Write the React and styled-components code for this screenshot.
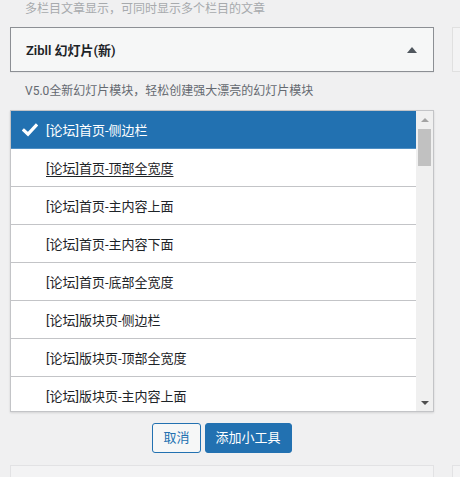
import React from "react";
import styled, { createGlobalStyle } from "styled-components";

const Global = createGlobalStyle`
  html, body { margin: 0; padding: 0; background: #f0f0f1; overflow: hidden; }
  body { font-family: Roboto, "Noto Sans CJK SC", sans-serif; color: #2c3338; }
  * { box-sizing: border-box; }
`;

const Page = styled.div`
  display: flex;
  align-items: flex-start;
  gap: 18px;
  padding-left: 10px;
  width: 460px;
  height: 477px;
  overflow: hidden;
`;

const Main = styled.div`
  width: 424px;
  flex-shrink: 0;
  display: flex;
  flex-direction: column;
  & > * { flex-shrink: 0; }
`;

const Side = styled.div`
  flex: 1;
  display: flex;
  flex-direction: column;
  padding-top: 27px;
  & > * { flex-shrink: 0; }
`;

const Desc = styled.div`
  font-size: 12px;
  line-height: 18px;
  color: ${(p) => (p.$faded ? "#a7aaad" : "#646970")};
  padding-left: 15px;
  margin-top: ${(p) => p.$mt || 0}px;
  white-space: nowrap;
`;

const Header = styled.div`
  margin-top: ${(p) => (p.$ghost ? 0 : 9)}px;
  height: 45px;
  border: 1px solid ${(p) => (p.$ghost ? "#e0e0e0" : "#8c8f94")};
  background: ${(p) => (p.$ghost ? "#f3f3f4" : "#f6f7f7")};
  box-shadow: ${(p) => (p.$ghost ? "none" : "0 1px 1px rgba(0,0,0,.04)")};
  display: flex;
  align-items: center;
  justify-content: space-between;
  padding: 0 16px 0 15px;
`;

const Title = styled.h3`
  margin: 0;
  font-size: 13px;
  font-weight: 600;
  color: #1d2327;
`;

const Caret = styled.span`
  width: 0;
  height: 0;
  border-left: 5px solid transparent;
  border-right: 5px solid transparent;
  border-bottom: 6px solid #50575e;
`;

const ListBox = styled.div`
  margin-top: 10px;
  height: 302px;
  border: 1px solid #c3c4c7;
  background: #fff;
  box-shadow: 0 1px 2px rgba(0, 0, 0, 0.12);
  display: flex;
  overflow: hidden;
`;

const Items = styled.ul`
  list-style: none;
  margin: 0;
  padding: 0;
  flex: 1;
  overflow: hidden;
`;

const Item = styled.li`
  height: 38px;
  border-bottom: 1px solid ${(p) => (p.$selected ? "#4f8fc4" : "#c3c4c7")};
  background: ${(p) => (p.$selected ? "#2271b1" : "#fff")};
  color: ${(p) => (p.$selected ? "#fff" : "#1d2327")};
  font-size: 13px;
  display: flex;
  align-items: center;
  padding-left: 35px;
  position: relative;
  text-decoration: ${(p) => (p.$focus ? "underline" : "none")};
  text-underline-offset: 3px;
`;

const Check = styled.svg`
  position: absolute;
  left: 11px;
  top: 12px;
`;

const Scrollbar = styled.div`
  width: 17px;
  background: #f0f0f0;
  display: flex;
  flex-direction: column;
  align-items: center;
`;

const ArrowBtn = styled.div`
  height: 17px;
  width: 17px;
  display: flex;
  align-items: center;
  justify-content: center;
  margin-top: ${(p) => (p.$down ? "auto" : "0")};
  &::before {
    content: "";
    width: 0;
    height: 0;
    border-left: 4px solid transparent;
    border-right: 4px solid transparent;
    ${(p) =>
      p.$down
        ? "border-top: 4px solid #505050;"
        : "border-bottom: 4px solid #a3a3a3;"}
  }
`;

const Thumb = styled.div`
  margin-top: 1px;
  width: 13px;
  height: 37px;
  background: #c1c1c1;
`;

const Actions = styled.div`
  display: flex;
  justify-content: center;
  gap: 4px;
  margin-top: 11px;
`;

const Button = styled.button`
  height: 30px;
  padding: 0 10px;
  border-radius: 3px;
  font-family: inherit;
  font-size: 13px;
  line-height: 28px;
  border: 1px solid #2271b1;
  background: ${(p) => (p.$primary ? "#2271b1" : "#f6f7f7")};
  color: ${(p) => (p.$primary ? "#fff" : "#2271b1")};
  cursor: pointer;
`;

const Card = styled.div`
  margin-top: ${(p) => p.$mt}px;
  height: 60px;
  border: 1px solid #e2e2e4;
  background: #f3f3f4;
`;

const items = [
  "[论坛]首页-侧边栏",
  "[论坛]首页-顶部全宽度",
  "[论坛]首页-主内容上面",
  "[论坛]首页-主内容下面",
  "[论坛]首页-底部全宽度",
  "[论坛]版块页-侧边栏",
  "[论坛]版块页-顶部全宽度",
  "[论坛]版块页-主内容上面",
];

export default function App() {
  return (
    <>
      <Global />
      <Page>
        <Main>
          <Desc $faded>多栏目文章显示，可同时显示多个栏目的文章</Desc>
          <Header>
            <Title>Zibll 幻灯片(新)</Title>
            <Caret />
          </Header>
          <Desc $mt={10}>V5.0全新幻灯片模块，轻松创建强大漂亮的幻灯片模块</Desc>
          <ListBox>
            <Items>
              {items.map((t, i) => (
                <Item key={t} $selected={i === 0} $focus={i === 1}>
                  {i === 0 && (
                    <Check width="16" height="14" viewBox="0 0 16 14">
                      <path
                        d="M2 7.5 L6 11.2 L14 2.5"
                        fill="none"
                        stroke="#fff"
                        strokeWidth="3.2"
                        strokeLinecap="square"
                      />
                    </Check>
                  )}
                  {t}
                </Item>
              ))}
            </Items>
            <Scrollbar>
              <ArrowBtn />
              <Thumb />
              <ArrowBtn $down />
            </Scrollbar>
          </ListBox>
          <Actions>
            <Button>取消</Button>
            <Button $primary>添加小工具</Button>
          </Actions>
          <Card $mt={12} />
        </Main>
        <Side>
          <Header $ghost />
          <Card $mt={393} />
        </Side>
      </Page>
    </>
  );
}
